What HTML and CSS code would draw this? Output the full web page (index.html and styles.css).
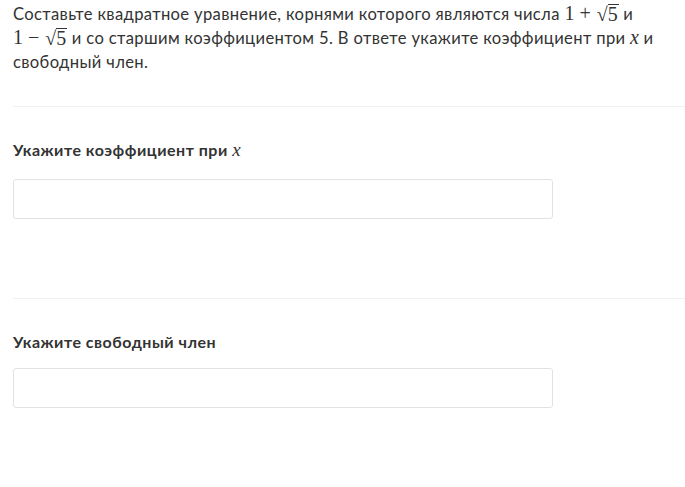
FILE: index.html
```html
<!DOCTYPE html>
<html lang="ru">
<head>
<meta charset="utf-8">
<link rel="stylesheet" href="styles.css">
</head>
<body>
<div class="page">
  <p class="question">Составьте квадратное уравнение, корнями которого являются числа <span class="math">1<span class="op">+</span><span class="sqrt"><span class="rad">√</span><span class="radicand">5</span></span></span> и <span class="math">1<span class="op">−</span><span class="sqrt"><span class="rad">√</span><span class="radicand">5</span></span></span> и со старшим коэффициентом 5. В ответе укажите коэффициент при <span class="math"><i>x</i></span> и свободный член.</p>
  <div class="divider"></div>
  <section class="field first">
    <label class="label">Укажите коэффициент при <span class="math"><i>x</i></span></label>
    <input class="input" type="text">
  </section>
  <div class="divider"></div>
  <section class="field">
    <label class="label">Укажите свободный член</label>
    <input class="input" type="text">
  </section>
</div>
</body>
</html>
```

FILE: styles.css
```css
html, body {
  margin: 0;
  padding: 0;
  background: #ffffff;
}
.page {
  padding: 2px 0 0 13px;
  font-family: Lato, "Open Sans", sans-serif;
  color: #333333;
}
.question {
  margin: 0;
  font-size: 16.6px;
  letter-spacing: 0.35px;
  line-height: 24px;
  max-width: 672px;
}
.math {
  font-family: "Liberation Serif", "DejaVu Serif", serif;
  font-size: 20px;
  letter-spacing: 0;
  line-height: 1;
  white-space: nowrap;
}
.math i {
  font-style: italic;
}
.op {
  margin: 0 5px;
}
.sqrt {
  display: inline-flex;
  align-items: flex-end;
  margin-left: 1px;
}
.rad {
  font-size: 20px;
  line-height: 1;
  position: relative;
  top: 1px;
}
.radicand {
  border-top: 1px solid #333333;
  line-height: 17px;
  padding-top: 1px;
  padding-right: 1px;
}
.divider {
  height: 1px;
  background: #f0f0f0;
  margin-top: 32px;
}
.field {
  display: flex;
  flex-direction: column;
  align-items: flex-start;
  padding-top: 31px;
  padding-bottom: 79px;
}
.field:last-child {
  padding-bottom: 0;
}
.label {
  font-size: 16px;
  font-weight: bold;
  letter-spacing: 0.5px;
  line-height: 24px;
  margin-bottom: 14px;
  color: #333333;
}
.first .label {
  margin-bottom: 17px;
}
.label .math {
  font-weight: normal;
  font-size: 19px;
}
.input {
  box-sizing: border-box;
  width: 540px;
  height: 40px;
  border: 1px solid #e2e2e2;
  border-radius: 3px;
  background: #ffffff;
  margin: 0;
  padding: 0 10px;
  outline: none;
}
.field + .divider {
  margin-top: 0;
}
```
